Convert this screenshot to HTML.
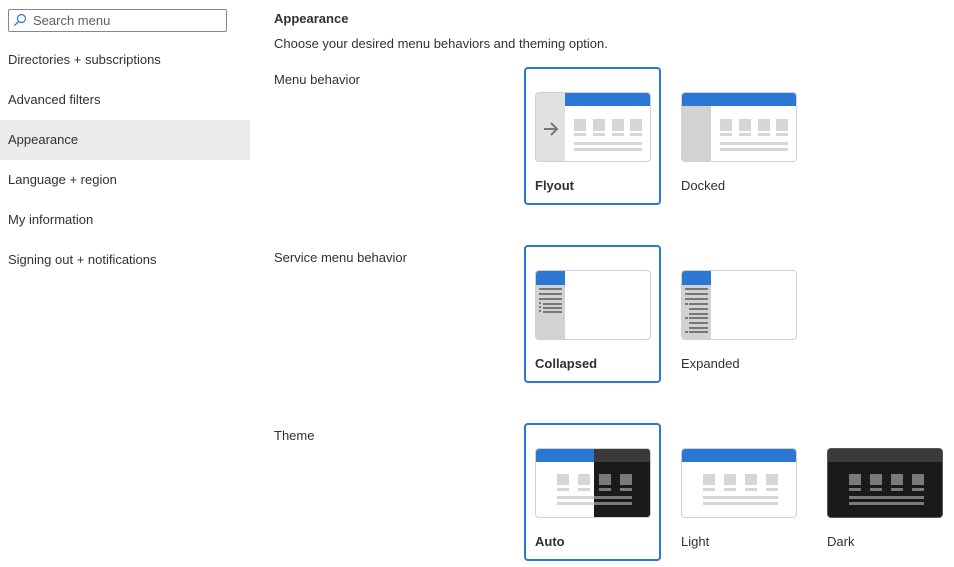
<!DOCTYPE html>
<html><head><meta charset="utf-8"><style>
*{box-sizing:border-box;margin:0;padding:0}
body{width:954px;height:567px;background:#fff;font-family:"Liberation Sans",sans-serif;font-size:13px;color:#323130;position:relative;overflow:hidden}
.a{position:absolute}
.nav{position:absolute;left:0;width:250px;height:40px;line-height:40px;padding-left:8px;font-size:13px}
.card{position:absolute;width:137px;height:138px;border:2px solid #2b78d4;border-radius:4px}
.th{position:absolute;width:116px;height:70px;border:1px solid #d2d0ce;border-radius:4px;overflow:hidden;background:#fff}
.lbl{position:absolute;font-size:13px}
.b{position:absolute}
</style></head><body>
<div class="a" style="left:8px;top:9px;width:219px;height:23px;border:1px solid #8a8886;border-radius:2px"></div>
<svg class="a" style="left:13px;top:13px" width="14" height="14" viewBox="0 0 14 14"><circle cx="8.5" cy="5.5" r="4" fill="none" stroke="#2b78d4" stroke-width="1.2"/><line x1="5.6" y1="8.4" x2="1.5" y2="12.5" stroke="#2b78d4" stroke-width="1.3"/></svg>
<div class="a" style="left:33px;top:13px;font-size:13px;color:#605e5c">Search menu</div>
<div class="nav" style="top:40px">Directories + subscriptions</div>
<div class="nav" style="top:80px">Advanced filters</div>
<div class="nav" style="top:120px;background:#edebe9">Appearance</div>
<div class="nav" style="top:160px">Language + region</div>
<div class="nav" style="top:200px">My information</div>
<div class="nav" style="top:240px">Signing out + notifications</div>

<div class="a" style="left:274px;top:11px;font-weight:bold;font-size:13px">Appearance</div>
<div class="a" style="left:274px;top:36px">Choose your desired menu behaviors and theming option.</div>
<div class="a" style="left:274px;top:72px">Menu behavior</div>
<div class="a" style="left:274px;top:250px">Service menu behavior</div>
<div class="a" style="left:274px;top:428px">Theme</div>

<div class="card" style="left:524px;top:67px"></div>
<div class="card" style="left:524px;top:245px"></div>
<div class="card" style="left:524px;top:423px"></div>
<div class="lbl" style="left:535px;top:178px;font-weight:bold">Flyout</div>
<div class="lbl" style="left:681px;top:178px">Docked</div>
<div class="lbl" style="left:535px;top:356px;font-weight:bold">Collapsed</div>
<div class="lbl" style="left:681px;top:356px">Expanded</div>
<div class="lbl" style="left:535px;top:534px;font-weight:bold">Auto</div>
<div class="lbl" style="left:681px;top:534px">Light</div>
<div class="lbl" style="left:827px;top:534px">Dark</div>

<!-- Flyout -->
<div class="th" style="left:535px;top:92px">
 <div class="b" style="left:0;top:0;width:29px;height:70px;background:#e1e1e1"></div>
 <div class="b" style="left:29px;top:0;width:90px;height:13px;background:#2b78d4"></div>
 <svg class="b" style="left:6px;top:28px" width="18" height="16" viewBox="0 0 18 16"><path d="M2 8H15M9 2L15 8L9 14" fill="none" stroke="#777" stroke-width="2"/></svg>
 <div class="b" style="left:38px;top:26px;width:12px;height:12px;background:#d6d6d6"></div>
 <div class="b" style="left:57px;top:26px;width:12px;height:12px;background:#d6d6d6"></div>
 <div class="b" style="left:76px;top:26px;width:12px;height:12px;background:#d6d6d6"></div>
 <div class="b" style="left:94px;top:26px;width:12px;height:12px;background:#d6d6d6"></div>
 <div class="b" style="left:38px;top:40px;width:12px;height:3px;background:#d6d6d6"></div>
 <div class="b" style="left:57px;top:40px;width:12px;height:3px;background:#d6d6d6"></div>
 <div class="b" style="left:76px;top:40px;width:12px;height:3px;background:#d6d6d6"></div>
 <div class="b" style="left:94px;top:40px;width:12px;height:3px;background:#d6d6d6"></div>
 <div class="b" style="left:38px;top:49px;width:68px;height:3px;background:#d6d6d6"></div>
 <div class="b" style="left:38px;top:55px;width:68px;height:3px;background:#d6d6d6"></div>
</div>
<!-- Docked -->
<div class="th" style="left:681px;top:92px">
 <div class="b" style="left:0;top:13px;width:29px;height:60px;background:#d2d2d2"></div>
 <div class="b" style="left:0;top:0;width:116px;height:13px;background:#2b78d4"></div>
 <div class="b" style="left:38px;top:26px;width:12px;height:12px;background:#d6d6d6"></div>
 <div class="b" style="left:57px;top:26px;width:12px;height:12px;background:#d6d6d6"></div>
 <div class="b" style="left:76px;top:26px;width:12px;height:12px;background:#d6d6d6"></div>
 <div class="b" style="left:94px;top:26px;width:12px;height:12px;background:#d6d6d6"></div>
 <div class="b" style="left:38px;top:40px;width:12px;height:3px;background:#d6d6d6"></div>
 <div class="b" style="left:57px;top:40px;width:12px;height:3px;background:#d6d6d6"></div>
 <div class="b" style="left:76px;top:40px;width:12px;height:3px;background:#d6d6d6"></div>
 <div class="b" style="left:94px;top:40px;width:12px;height:3px;background:#d6d6d6"></div>
 <div class="b" style="left:38px;top:49px;width:68px;height:3px;background:#d6d6d6"></div>
 <div class="b" style="left:38px;top:55px;width:68px;height:3px;background:#d6d6d6"></div>
</div>
<!-- Collapsed -->
<div class="th" style="left:535px;top:270px">
 <div class="b" style="left:0;top:0;width:29px;height:70px;background:#d2d2d2"></div>
 <div class="b" style="left:0;top:0;width:29px;height:14px;background:#2b78d4"></div>
 <div class="b" style="left:3px;top:17px;width:23px;height:2px;background:#777"></div>
 <div class="b" style="left:3px;top:22px;width:23px;height:2px;background:#777"></div>
 <div class="b" style="left:3px;top:27px;width:23px;height:2px;background:#777"></div>
 <div class="b" style="left:7px;top:32px;width:19px;height:2px;background:#777"></div>
 <div class="b" style="left:7px;top:36px;width:19px;height:2px;background:#777"></div>
 <div class="b" style="left:7px;top:40px;width:19px;height:2px;background:#777"></div>
 <div class="b" style="left:3px;top:31px;width:2px;height:12px;background:repeating-linear-gradient(#777 0 2px,transparent 2px 4px)"></div>
</div>
<!-- Expanded -->
<div class="th" style="left:681px;top:270px">
 <div class="b" style="left:0;top:0;width:29px;height:70px;background:#d2d2d2"></div>
 <div class="b" style="left:0;top:0;width:29px;height:14px;background:#2b78d4"></div>
 <div class="b" style="left:3px;top:17px;width:23px;height:2px;background:#777"></div>
 <div class="b" style="left:3px;top:22px;width:23px;height:2px;background:#777"></div>
 <div class="b" style="left:3px;top:27px;width:23px;height:2px;background:#777"></div>
 <div class="b" style="left:7px;top:32px;width:19px;height:2px;background:#777"></div>
 <div class="b" style="left:7px;top:37px;width:19px;height:2px;background:#777"></div>
 <div class="b" style="left:7px;top:42px;width:19px;height:2px;background:#777"></div>
 <div class="b" style="left:7px;top:46px;width:19px;height:2px;background:#777"></div>
 <div class="b" style="left:7px;top:51px;width:19px;height:2px;background:#777"></div>
 <div class="b" style="left:7px;top:56px;width:19px;height:2px;background:#777"></div>
 <div class="b" style="left:7px;top:60px;width:19px;height:2px;background:#777"></div>
 <div class="b" style="left:3px;top:32px;width:3px;height:2px;background:#777"></div>
 <div class="b" style="left:3px;top:46px;width:3px;height:2px;background:#777"></div>
 <div class="b" style="left:3px;top:60px;width:3px;height:2px;background:#777"></div>
</div>
<!-- Auto -->
<div class="th" style="left:535px;top:448px">
 <div class="b" style="left:0;top:0;width:58px;height:13px;background:#2b78d4"></div>
 <div class="b" style="left:58px;top:0;width:60px;height:70px;background:#1b1a19"></div>
 <div class="b" style="left:58px;top:0;width:60px;height:13px;background:#3b3a39"></div>
 <div class="b" style="left:21px;top:25px;width:12px;height:11px;background:#d6d6d6"></div>
 <div class="b" style="left:42px;top:25px;width:12px;height:11px;background:#d6d6d6"></div>
 <div class="b" style="left:63px;top:25px;width:12px;height:11px;background:#7a7a7a"></div>
 <div class="b" style="left:84px;top:25px;width:12px;height:11px;background:#7a7a7a"></div>
 <div class="b" style="left:21px;top:39px;width:12px;height:3px;background:#d6d6d6"></div>
 <div class="b" style="left:42px;top:39px;width:12px;height:3px;background:#d6d6d6"></div>
 <div class="b" style="left:63px;top:39px;width:12px;height:3px;background:#7a7a7a"></div>
 <div class="b" style="left:84px;top:39px;width:12px;height:3px;background:#7a7a7a"></div>
 <div class="b" style="left:21px;top:47px;width:37px;height:3px;background:#d6d6d6"></div>
 <div class="b" style="left:21px;top:53px;width:37px;height:3px;background:#d6d6d6"></div>
 <div class="b" style="left:58px;top:47px;width:38px;height:3px;background:#7a7a7a"></div>
 <div class="b" style="left:58px;top:53px;width:38px;height:3px;background:#7a7a7a"></div>
</div>
<!-- Light -->
<div class="th" style="left:681px;top:448px">
 <div class="b" style="left:0;top:0;width:116px;height:13px;background:#2b78d4"></div>
 <div class="b" style="left:21px;top:25px;width:12px;height:11px;background:#d6d6d6"></div>
 <div class="b" style="left:42px;top:25px;width:12px;height:11px;background:#d6d6d6"></div>
 <div class="b" style="left:63px;top:25px;width:12px;height:11px;background:#d6d6d6"></div>
 <div class="b" style="left:84px;top:25px;width:12px;height:11px;background:#d6d6d6"></div>
 <div class="b" style="left:21px;top:39px;width:12px;height:3px;background:#d6d6d6"></div>
 <div class="b" style="left:42px;top:39px;width:12px;height:3px;background:#d6d6d6"></div>
 <div class="b" style="left:63px;top:39px;width:12px;height:3px;background:#d6d6d6"></div>
 <div class="b" style="left:84px;top:39px;width:12px;height:3px;background:#d6d6d6"></div>
 <div class="b" style="left:21px;top:47px;width:75px;height:3px;background:#d6d6d6"></div>
 <div class="b" style="left:21px;top:53px;width:75px;height:3px;background:#d6d6d6"></div>
</div>
<!-- Dark -->
<div class="th" style="left:827px;top:448px;background:#1b1a19;border-color:#555">
 <div class="b" style="left:0;top:0;width:116px;height:13px;background:#3b3a39"></div>
 <div class="b" style="left:21px;top:25px;width:12px;height:11px;background:#7a7a7a"></div>
 <div class="b" style="left:42px;top:25px;width:12px;height:11px;background:#7a7a7a"></div>
 <div class="b" style="left:63px;top:25px;width:12px;height:11px;background:#7a7a7a"></div>
 <div class="b" style="left:84px;top:25px;width:12px;height:11px;background:#7a7a7a"></div>
 <div class="b" style="left:21px;top:39px;width:12px;height:3px;background:#7a7a7a"></div>
 <div class="b" style="left:42px;top:39px;width:12px;height:3px;background:#7a7a7a"></div>
 <div class="b" style="left:63px;top:39px;width:12px;height:3px;background:#7a7a7a"></div>
 <div class="b" style="left:84px;top:39px;width:12px;height:3px;background:#7a7a7a"></div>
 <div class="b" style="left:21px;top:47px;width:75px;height:3px;background:#7a7a7a"></div>
 <div class="b" style="left:21px;top:53px;width:75px;height:3px;background:#7a7a7a"></div>
</div>
</body></html>
